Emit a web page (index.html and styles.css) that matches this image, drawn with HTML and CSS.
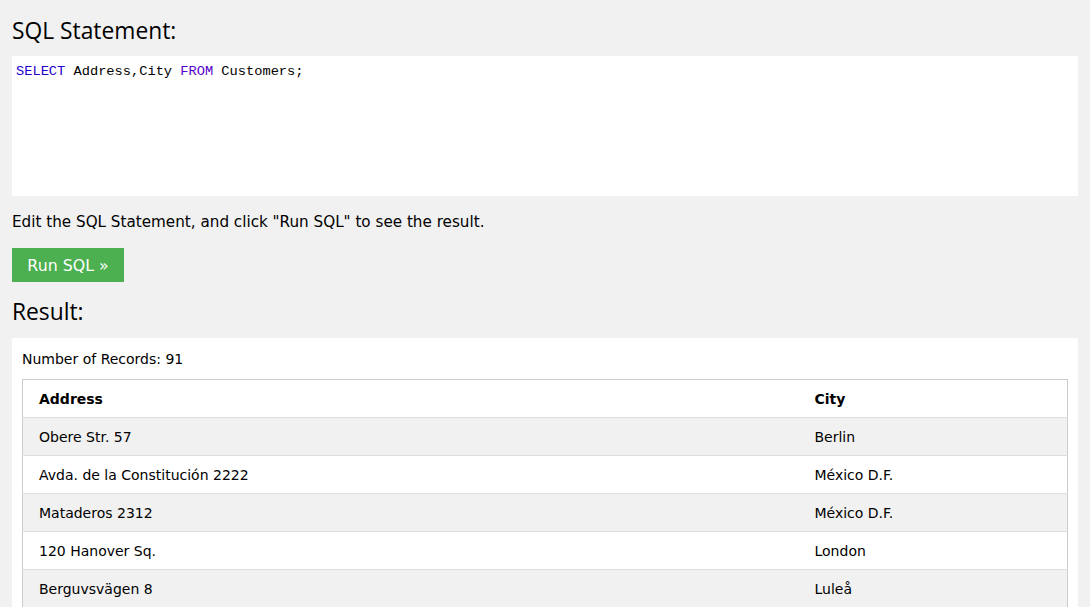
FILE: index.html
```html
<!DOCTYPE html>
<html>
<head>
<meta charset="utf-8">
<link rel="stylesheet" href="styles.css">
</head>
<body>
<div class="page">
  <h2 class="heading">SQL Statement:</h2>
  <div class="editor"><span class="kw-select">SELECT</span> Address,City <span class="kw-from">FROM</span> Customers;</div>
  <p class="hint">Edit the SQL Statement, and click "Run SQL" to see the result.</p>
  <button class="run-btn">Run SQL »</button>
  <h2 class="heading result-heading">Result:</h2>
  <div class="result">
    <div class="count">Number of Records: 91</div>
    <table class="data">
      <colgroup><col class="col-address"><col></colgroup>
      <tr><th>Address</th><th>City</th></tr>
      <tr><td>Obere Str. 57</td><td>Berlin</td></tr>
      <tr><td>Avda. de la Constitución 2222</td><td>México D.F.</td></tr>
      <tr><td>Mataderos 2312</td><td>México D.F.</td></tr>
      <tr><td>120 Hanover Sq.</td><td>London</td></tr>
      <tr><td>Berguvsvägen 8</td><td>Luleå</td></tr>
    </table>
  </div>
</div>
</body>
</html>
```
FILE: styles.css
```css
html, body {
  margin: 0;
  padding: 0;
  background: #f1f1f1;
  overflow: hidden;
  height: 607px;
}
body {
  font-family: "DejaVu Sans", Verdana, sans-serif;
  color: #000;
}
.page {
  padding: 0 12px;
}
.heading {
  font-family: "Open Sans", "Noto Sans", sans-serif;
  font-weight: 400;
  font-size: 22.8px;
  line-height: 30px;
  margin: 0;
  padding-top: 16px;
  padding-bottom: 10px;
  color: #000;
}
.editor {
  background: #fff;
  height: 140px;
  box-sizing: border-box;
  padding: 6px 4px 4px;
  font-family: "Liberation Mono", monospace;
  font-size: 13.7px;
  line-height: 20px;
  color: #000;
}
.kw-select { color: #2200cc; }
.kw-from { color: #5500cc; }
.hint {
  margin: 0;
  padding-top: 16px;
  font-size: 15.2px;
  line-height: 20px;
  height: 36px;
}
.run-btn {
  display: block;
  border: none;
  background: #4caf50;
  color: #fff;
  font-family: "DejaVu Sans", Verdana, sans-serif;
  font-size: 15.8px;
  line-height: 20px;
  height: 34px;
  width: 112px;
  padding: 2px 0 0;
  margin: 0;
}
.result-heading {
  padding-top: 15px;
  padding-bottom: 11px;
}
.result {
  background: #fff;
  padding: 10px 10px 0;
}
.count {
  font-size: 14px;
  line-height: 20px;
  padding-top: 1px;
  height: 30px;
}
.data {
  width: 100%;
  table-layout: fixed;
  border-collapse: collapse;
  border: 1px solid #ccc;
  font-size: 14px;
}
.col-address { width: 784px; }
.data th, .data td {
  text-align: left;
  padding: 9px 8px 7px;
  line-height: 21px;
  border-bottom: 1px solid #ddd;
}
.data th:first-child, .data td:first-child {
  padding-left: 16px;
}
.data th {
  font-weight: 700;
  background: #fff;
}
.data tr:nth-child(even) td {
  background: #f1f1f1;
}
.data tr:nth-child(odd) td {
  background: #fff;
}
```
